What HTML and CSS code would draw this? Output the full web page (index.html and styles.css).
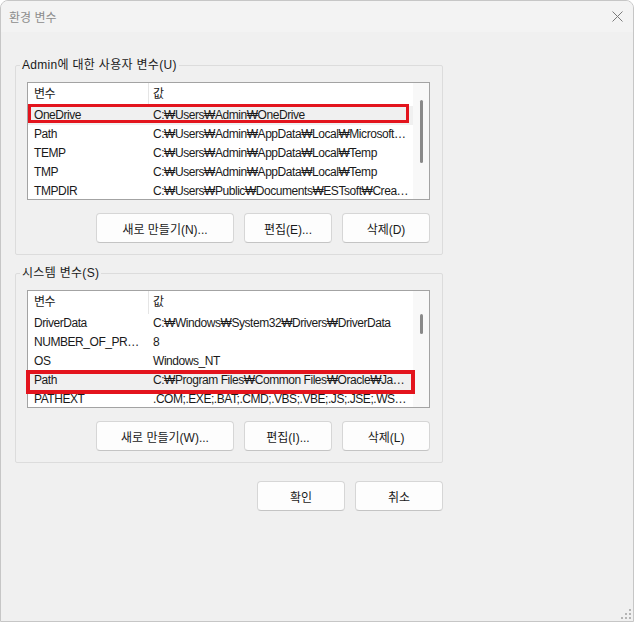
FILE: index.html
```html
<!DOCTYPE html>
<html lang="ko">
<head>
    <meta charset="UTF-8">
    <title>환경 변수</title>
    <link rel="stylesheet" href="styles.css">
</head>
<body>
    <div class="window">
        <div class="titlebar">
            <span class="title">환경 변수</span>
            <svg class="close" width="11" height="11" viewBox="0 0 11 11">
                <path d="M0.5 0.5 L10.5 10.5 M10.5 0.5 L0.5 10.5" stroke="#7a7a7a" stroke-width="1" fill="none"/>
            </svg>
        </div>

        <div class="main">
            <fieldset class="group">
                <legend>Admin에 대한 사용자 변수(U)</legend>
                <div class="list">
                    <div class="rows">
                        <div class="row head"><span class="name">변수</span><span class="value">값</span></div>
                        <div class="row selected"><span class="name">OneDrive</span><span class="value">C:₩Users₩Admin₩OneDrive</span></div>
                        <div class="row"><span class="name">Path</span><span class="value">C:₩Users₩Admin₩AppData₩Local₩Microsoft₩WindowsApps;</span></div>
                        <div class="row"><span class="name">TEMP</span><span class="value">C:₩Users₩Admin₩AppData₩Local₩Temp</span></div>
                        <div class="row"><span class="name">TMP</span><span class="value">C:₩Users₩Admin₩AppData₩Local₩Temp</span></div>
                        <div class="row"><span class="name">TMPDIR</span><span class="value">C:₩Users₩Public₩Documents₩ESTsoft₩CreatorTemp</span></div>
                    </div>
                    <div class="scrollbar"><div class="thumb thumb-user"></div></div>
                    <div class="mark mark-user"></div>
                </div>
                <div class="buttons">
                    <button class="btn btn-new">새로 만들기(N)...</button>
                    <button class="btn btn-small">편집(E)...</button>
                    <button class="btn btn-small">삭제(D)</button>
                </div>
            </fieldset>

            <fieldset class="group">
                <legend>시스템 변수(S)</legend>
                <div class="list">
                    <div class="rows">
                        <div class="row head"><span class="name">변수</span><span class="value">값</span></div>
                        <div class="row"><span class="name">DriverData</span><span class="value">C:₩Windows₩System32₩Drivers₩DriverData</span></div>
                        <div class="row"><span class="name">NUMBER_OF_PROCESSORS</span><span class="value">8</span></div>
                        <div class="row"><span class="name">OS</span><span class="value">Windows_NT</span></div>
                        <div class="row selected"><span class="name">Path</span><span class="value">C:₩Program Files₩Common Files₩Oracle₩Java₩javapath;</span></div>
                        <div class="row"><span class="name">PATHEXT</span><span class="value">.COM;.EXE;.BAT;.CMD;.VBS;.VBE;.JS;.JSE;.WSF;.WSH;.MSC</span></div>
                    </div>
                    <div class="scrollbar"><div class="thumb thumb-sys"></div></div>
                    <div class="mark mark-sys"></div>
                </div>
                <div class="buttons">
                    <button class="btn btn-new">새로 만들기(W)...</button>
                    <button class="btn btn-small">편집(I)...</button>
                    <button class="btn btn-small">삭제(L)</button>
                </div>
            </fieldset>

            <div class="dialog-buttons">
                <button class="btn btn-small">확인</button>
                <button class="btn btn-small">취소</button>
            </div>
        </div>

        <svg class="grip" width="12" height="12" viewBox="0 0 12 12">
            <rect x="9" y="1" width="2" height="2" fill="#b4b4b4"/>
            <rect x="9" y="5" width="2" height="2" fill="#b4b4b4"/>
            <rect x="5" y="5" width="2" height="2" fill="#b4b4b4"/>
            <rect x="9" y="9" width="2" height="2" fill="#b4b4b4"/>
            <rect x="5" y="9" width="2" height="2" fill="#b4b4b4"/>
            <rect x="1" y="9" width="2" height="2" fill="#b4b4b4"/>
        </svg>
    </div>
</body>
</html>
```

FILE: styles.css
```css
* {
    box-sizing: border-box;
}
body {
    margin: 0;
    background-color: #ffffff;
    font-family: "Liberation Sans", "Noto Sans", "Noto Sans CJK KR", sans-serif;
    font-size: 12px;
    color: #1a1a1a;
}
.window {
    position: relative;
    width: 634px;
    height: 622px;
    border: 1px solid #c6c6c6;
    border-radius: 8px 8px 0 0;
    background-color: #f0f0f0;
    overflow: hidden;
}
.titlebar {
    height: 31px;
    display: flex;
    align-items: center;
    justify-content: space-between;
    padding: 0 10px 0 8px;
    background-color: #f3f3f3;
}
.title {
    color: #8c8c8c;
}
.main {
    padding: 25px 0 0 14px;
}
.group {
    width: 428px;
    min-width: 0;
    margin: 0;
    padding: 9px 12px 11px 11px;
    border: 1px solid #dcdcdc;
    border-radius: 2px;
}
.group + .group {
    margin-top: 10px;
}
legend {
    padding: 0 2px;
    margin-left: -7px;
    line-height: 16px;
    letter-spacing: 0.3px;
}
.list {
    position: relative;
    display: flex;
    height: 118px;
    border: 1px solid #a3a3a3;
    background-color: #ffffff;
}
.rows {
    flex: 1;
    min-width: 0;
    overflow: hidden;
    letter-spacing: -0.45px;
}
.row {
    display: flex;
    height: 19px;
    line-height: 19px;
}
.row.head {
    height: 23px;
    line-height: 23px;
}
.row.selected {
    background-color: #f0f0f0;
}
.name {
    width: 121px;
    flex-shrink: 0;
    padding: 0 2px 0 6px;
    white-space: nowrap;
    overflow: hidden;
    text-overflow: ellipsis;
}
.head .name {
    border-right: 1px solid #e5e5e5;
}
.value {
    flex: 1;
    min-width: 0;
    padding: 0 4px;
    white-space: nowrap;
    overflow: hidden;
    text-overflow: ellipsis;
}
.scrollbar {
    width: 16px;
    display: flex;
    justify-content: center;
    background-color: #f8f8f8;
}
.thumb {
    width: 3px;
    border-radius: 2px;
    background-color: #898989;
}
.thumb-user {
    margin-top: 17px;
    height: 63px;
}
.thumb-sys {
    margin-top: 23px;
    height: 20px;
}
/* red annotation boxes drawn over the rows */
.mark {
    position: absolute;
    border: 3px solid #e3141d;
}
.mark-user {
    left: 0;
    top: 21px;
    width: 381px;
    height: 19px;
}
.mark-sys {
    left: -2px;
    top: 79px;
    width: 389px;
    height: 24px;
    border-width: 4px;
}
.buttons {
    display: flex;
    justify-content: flex-end;
    gap: 10px;
    margin-top: 13px;
}
.btn {
    height: 30px;
    padding: 0;
    background-color: #fdfdfd;
    border: 1px solid #d6d6d6;
    border-bottom-color: #c4c4c4;
    border-radius: 4px;
    font: inherit;
    color: #1a1a1a;
}
.btn-new {
    width: 138px;
}
.btn-small {
    width: 88px;
}
.dialog-buttons {
    width: 428px;
    display: flex;
    justify-content: flex-end;
    gap: 10px;
    margin-top: 18px;
}
.grip {
    position: absolute;
    right: 1px;
    bottom: 1px;
}
```
